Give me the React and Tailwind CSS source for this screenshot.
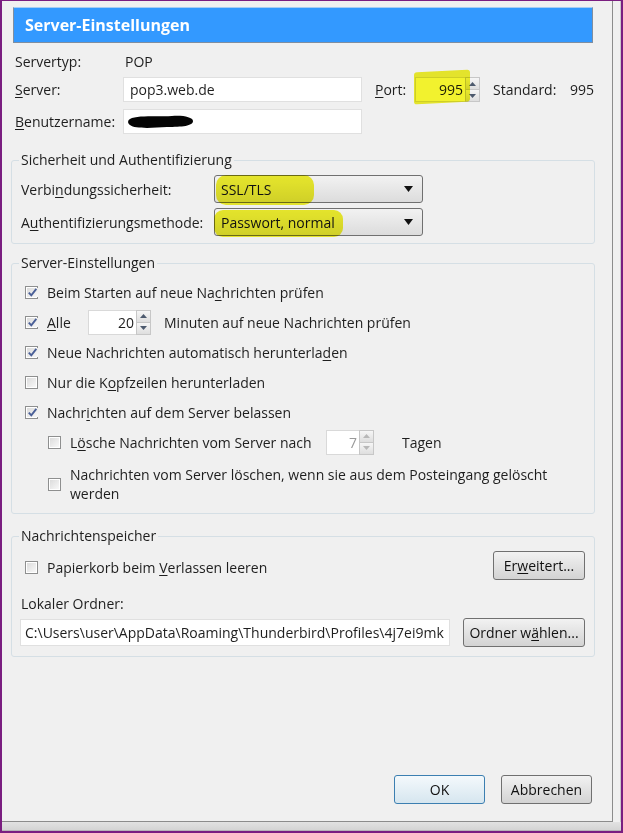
import React from 'react';

const font = { fontFamily: '"Open Sans", "Noto Sans", sans-serif' };

// kleine Hilfskomponenten im Windows-7-Stil
function Check({ checked }) {
  return (
    <span className="w-[13px] h-[13px] shrink-0 border border-[#8e8f8f] bg-white p-px flex">
      <span className="flex-1 flex items-center justify-center bg-linear-to-br from-[#dcdcdc] to-[#f8f8f8]">
        {checked && (
          <svg width="11" height="11" viewBox="0 0 11 11">
            <path d="M1.8 5.6 L4.3 8.3 L9.3 1.8" fill="none" stroke="#4a5f97" strokeWidth="1.9" />
          </svg>
        )}
      </span>
    </span>
  );
}

function Spin({ value, width, disabled }) {
  return (
    <div className="flex h-[25px]">
      <div
        className={`border border-[#d9d9d9] border-r-0 bg-white flex items-center justify-end pr-[2px] ${disabled ? 'text-[#9a9a9a]' : 'text-[#1e1e1e]'}`}
        style={{ width }}
      >
        {value}
      </div>
      <div className="w-[15px] flex flex-col border border-[#c7c7c7]">
        <div className="flex-1 flex items-center justify-center bg-linear-to-b from-[#f6f6f6] to-[#dedede] border-b border-[#c7c7c7]">
          <svg width="7" height="4" viewBox="0 0 7 4"><path d="M0 4 L3.5 0 L7 4Z" fill={disabled ? '#b8b8b8' : '#4d5a6e'} /></svg>
        </div>
        <div className="flex-1 flex items-center justify-center bg-linear-to-b from-[#f6f6f6] to-[#dedede]">
          <svg width="7" height="4" viewBox="0 0 7 4"><path d="M0 0 L3.5 4 L7 0Z" fill={disabled ? '#b8b8b8' : '#4d5a6e'} /></svg>
        </div>
      </div>
    </div>
  );
}

function Select({ children, mark }) {
  return (
    <div className="relative w-[209px] h-[28px] border border-[#707070] rounded-[3px] bg-linear-to-b from-[#f2f2f2] to-[#dcdcdc] flex items-center pl-[6px] text-[#111]">
      {mark}
      <span className="relative">{children}</span>
      <svg className="absolute right-[9px] top-[10px]" width="9" height="6" viewBox="0 0 9 6"><path d="M0 0 L9 0 L4.5 6Z" fill="#111" /></svg>
    </div>
  );
}

function Btn({ children, w, primary }) {
  return (
    <div
      className={`h-[29px] rounded-[3px] border flex items-center justify-center text-[#111] bg-linear-to-b ${primary ? 'border-[#3c7fb1] from-[#f4f9fc] to-[#d6e6ef]' : 'border-[#707070] from-[#f2f2f2] to-[#d3d3d3]'}`}
      style={{ width: w }}
    >
      {children}
    </div>
  );
}

function Row({ checked, children, indent }) {
  return (
    <div className={`flex items-center h-[30px] ${indent ? 'ml-[27px]' : 'ml-[4px]'}`}>
      <Check checked={checked} />
      <span className="ml-[9px] flex items-center">{children}</span>
    </div>
  );
}

const U = ({ children }) => <span className="underline underline-offset-2">{children}</span>;

export default function App() {
  return (
    <div className="w-[623px] h-[833px] border-l-2 border-t border-r-2 border-b-2 border-[#7a1e80] bg-[#f0f0f0] flex flex-col text-[14px] text-[#1e1e1e]" style={font}>
      <div className="flex flex-1">
        {/* Client-Bereich */}
        <div className="flex-1 flex flex-col border-r border-b border-[#8c8c8c] pt-[6px] pl-[11px]">
          <div className="w-[580px] h-[36px] bg-[#3399ff] border border-[#7f8ea0] border-t-[#a7cdf2] flex items-center pl-[11px] text-white font-bold text-[16px]">
            Server-Einstellungen
          </div>

          <div className="ml-[2px]">
            <div className="flex items-center h-[22px] mt-[7px]">
              <span className="w-[110px]">Servertyp:</span>
              <span>POP</span>
            </div>

            <div className="flex items-center h-[25px] mt-[5px]">
              <span className="w-[108px]"><U>S</U>erver:</span>
              <div className="w-[239px] h-[25px] bg-white border border-[#e0e0e0] flex items-center pl-[6px]">pop3.web.de</div>
              <span className="ml-[13px] w-[40px]"><U>P</U>ort:</span>
              <div className="relative">
                <div className="absolute left-[-1px] top-[-6px] w-[56px] h-[32px] bg-[#f2f22e] rounded-[3px] -skew-y-3 mix-blend-multiply z-10" />
                <Spin value="995" width={50} />
              </div>
              <span className="ml-[13px] w-[77px]">Standard:</span>
              <span>995</span>
            </div>

            <div className="flex items-center h-[25px] mt-[7px]">
              <span className="w-[108px]"><U>B</U>enutzername:</span>
              <div className="w-[239px] h-[25px] bg-white border border-[#e0e0e0] flex items-center pl-[3px]">
                <svg width="68" height="16" viewBox="0 0 68 16">
                  <path d="M3 5 C10 1, 30 3, 45 2 C55 1, 66 3, 66 7 C66 12, 55 13, 40 13 C25 14, 8 15, 3 11 C0 9, 1 6, 3 5Z" fill="#050505" />
                </svg>
              </div>
            </div>
          </div>

          {/* Sicherheit */}
          <fieldset className="w-[584px] -ml-[2px] mt-[17px] border border-[#d5dfe5] rounded-[3px] pl-[9px] pt-[6px] pb-[7px]">
            <legend className="px-[2px] -ml-[2px] leading-[18px]">Sicherheit und Authentifizierung</legend>
            <div className="flex items-center">
              <span className="w-[193px]">Verbi<U>n</U>dungssicherheit:</span>
              <Select mark={<div className="absolute left-[1px] top-[-1px] w-[98px] h-[30px] rounded-[10px] bg-[#f2f22e] mix-blend-multiply" />}>SSL/TLS</Select>
            </div>
            <div className="flex items-center mt-[5px]">
              <span className="w-[192px]">A<U>u</U>thentifizierungsmethode:</span>
              <div className="ml-[1px]" />
              <Select mark={<div className="absolute left-[-1px] top-[1px] w-[129px] h-[27px] rounded-[9px] bg-[#f2f22e] mix-blend-multiply" />}>Passwort, normal</Select>
            </div>
          </fieldset>

          {/* Server-Einstellungen */}
          <fieldset className="w-[584px] -ml-[2px] mt-[10px] border border-[#d5dfe5] rounded-[3px] pl-[9px] pt-[5px] pb-[10px]">
            <legend className="px-[2px] -ml-[2px] leading-[18px]">Server-Einstellungen</legend>
            <Row checked>Beim Starten auf neue Na<U>c</U>hrichten prüfen</Row>
            <Row checked>
              <span className="w-[41px]"><U>A</U>lle</span>
              <Spin value="20" width={48} />
              <span className="ml-[13px]">Minuten auf neue Nachrichten prüfen</span>
            </Row>
            <Row checked>Neue Nachrichten automatisch herunterla<U>d</U>en</Row>
            <Row>Nur die K<U>o</U>pfzeilen herunterladen</Row>
            <Row checked>Nachr<U>i</U>chten auf dem Server belassen</Row>
            <Row indent>
              <span className="w-[256px]">L<U>ö</U>sche Nachrichten vom Server nach</span>
              <Spin value="7" width={33} disabled />
              <span className="ml-[28px]">Tagen</span>
            </Row>
            <div className="flex items-center ml-[27px] mt-[8px]">
              <Check />
              <div className="ml-[9px] leading-[19px]">
                <div className="whitespace-nowrap">Nachrichten vom Server löschen, wenn sie aus dem Postein<U>g</U>ang gelöscht</div>
                <div>werden</div>
              </div>
            </div>
          </fieldset>

          {/* Nachrichtenspeicher */}
          <fieldset className="w-[584px] -ml-[2px] mt-[13px] border border-[#d5dfe5] rounded-[3px] pl-[9px] pr-[9px] pt-[6px] pb-[9px]">
            <legend className="px-[2px] -ml-[2px] leading-[18px]">Nachrichtenspeicher</legend>
            <div className="flex justify-between h-[28px]">
              <div className="flex items-center ml-[4px] mt-[4px]">
                <Check />
                <span className="ml-[9px]">Papierkorb beim <U>V</U>erlassen leeren</span>
              </div>
              <Btn w={92}>Er<U>w</U>eitert...</Btn>
            </div>
            <div className="mt-[16px] leading-[18px]">Lokaler Ordner:</div>
            <div className="flex items-center justify-between mt-[5px]">
              <div className="w-[430px] h-[27px] -ml-[1px] bg-white border border-[#e0e0e0] flex items-center pl-[4px] overflow-hidden whitespace-nowrap">
                C:\Users\user\AppData\Roaming\Thunderbird\Profiles\4j7ei9mk
              </div>
              <Btn w={122}>Ordner w<U>ä</U>hlen...</Btn>
            </div>
          </fieldset>

          <div className="mt-auto mb-[17px] flex justify-end gap-[16px] pr-[20px]">
            <Btn w={91} primary>OK</Btn>
            <Btn w={91}>Abbrechen</Btn>
          </div>
        </div>
        <div className="w-[8px] border-r border-[#c9c9c9]" />
      </div>
      <div className="h-[9px] bg-linear-to-b from-[#e2e2e2] to-[#d4d4d4] border-b border-[#b5b5b5]" />
    </div>
  );
}
